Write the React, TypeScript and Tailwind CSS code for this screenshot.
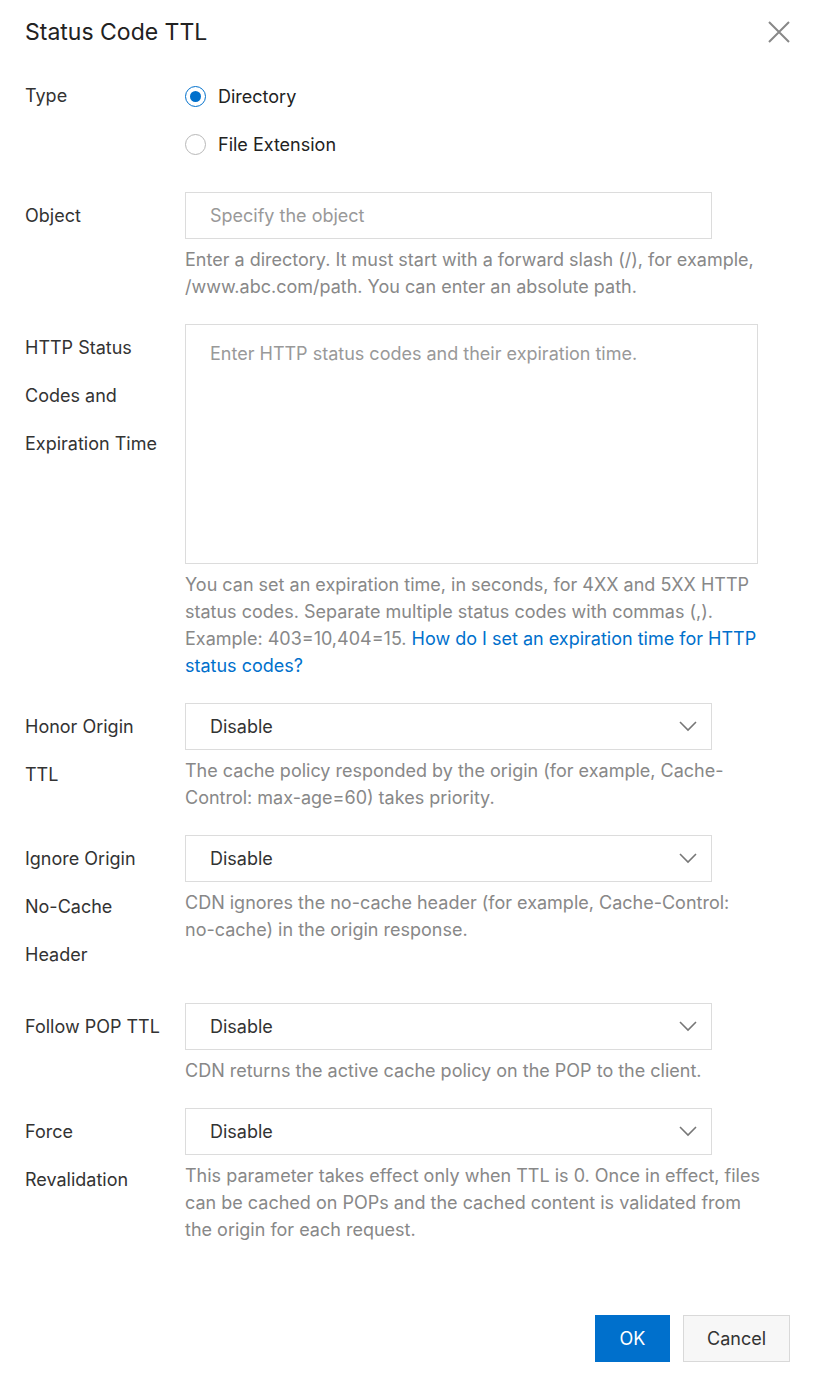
import React from "react"

const font = { fontFamily: "Inter, 'Liberation Sans', Arial, sans-serif" }

function Chevron() {
  return (
    <svg width="18" height="11" viewBox="0 0 18 11" fill="none" className="text-[#777]">
      <path d="M1 1l8 8 8-8" stroke="currentColor" strokeWidth="1.6" />
    </svg>
  )
}

function Radio({ checked, label }: { checked?: boolean; label: string }) {
  return (
    <div className="flex h-[48px] items-center">
      <span
        className={
          checked
            ? "flex h-[21px] w-[21px] items-center justify-center rounded-full border border-[#0070cc] bg-white"
            : "flex h-[21px] w-[21px] items-center justify-center rounded-full border border-[#b8b8b8] bg-white"
        }
      >
        {checked && <span className="h-[11px] w-[11px] rounded-full bg-[#0070cc]" />}
      </span>
      <span className="ml-[12px] text-[18px] text-[#222]">{label}</span>
    </div>
  )
}

function Row({ label, children }: { label: string[]; children: React.ReactNode }) {
  return (
    <div className="flex">
      <div className="w-[160px] shrink-0 text-[18px] leading-[48px] text-[#333]">
        {label.map((l) => (
          <div key={l}>{l}</div>
        ))}
      </div>
      <div className="w-[573px]">{children}</div>
    </div>
  )
}

function Help({ children }: { children: React.ReactNode }) {
  return <div className="mt-[7px] whitespace-nowrap text-[18px] leading-[27px] text-[#888]">{children}</div>
}

function Select() {
  return (
    <div className="flex h-[47px] w-[527px] items-center justify-between border border-[#dcdcdc] bg-white pl-[24px] pr-[14px]">
      <span className="text-[18px] text-[#333]">Disable</span>
      <Chevron />
    </div>
  )
}

export default function App() {
  return (
    <div className="min-h-[1382px] w-[822px] bg-white" style={font}>
      <div className="flex h-[64px] items-center justify-between pl-[25px] pr-[32px]">
        <h1 className="text-[23px] text-[#222]">Status Code TTL</h1>
        <svg width="22" height="22" viewBox="0 0 22 22" className="text-[#888]">
          <path d="M1 1l20 20M21 1L1 21" stroke="currentColor" strokeWidth="2" />
        </svg>
      </div>

      <div className="flex flex-col gap-6 pl-[25px] pt-[8px]">
        <Row label={["Type"]}>
          <Radio checked label="Directory" />
          <Radio label="File Extension" />
        </Row>

        <Row label={["Object"]}>
          <div className="flex h-[47px] w-[527px] items-center border border-[#dcdcdc] pl-[24px] text-[18px] text-[#999]">
            Specify the object
          </div>
          <Help>
            Enter a directory. It must start with a forward slash (/), for example,
            <br />
            /www.abc.com/path. You can enter an absolute path.
          </Help>
        </Row>

        <Row label={["HTTP Status", "Codes and", "Expiration Time"]}>
          <div className="h-[240px] w-[573px] border border-[#dcdcdc] pl-[24px] pt-[15px] text-[18px] text-[#999]">
            Enter HTTP status codes and their expiration time.
          </div>
          <Help>
            You can set an expiration time, in seconds, for 4XX and 5XX HTTP
            <br />
            status codes. Separate multiple status codes with commas (,).
            <br />
            Example: 403=10,404=15.{" "}
            <span className="text-[#0070cc]">
              How do I set an expiration time for HTTP
              <br />
              status codes?
            </span>
          </Help>
        </Row>

        <Row label={["Honor Origin", "TTL"]}>
          <Select />
          <Help>
            The cache policy responded by the origin (for example, Cache-
            <br />
            Control: max-age=60) takes priority.
          </Help>
        </Row>

        <Row label={["Ignore Origin", "No-Cache", "Header"]}>
          <Select />
          <Help>
            CDN ignores the no-cache header (for example, Cache-Control:
            <br />
            no-cache) in the origin response.
          </Help>
        </Row>

        <Row label={["Follow POP TTL"]}>
          <Select />
          <Help>CDN returns the active cache policy on the POP to the client.</Help>
        </Row>

        <Row label={["Force", "Revalidation"]}>
          <Select />
          <Help>
            This parameter takes effect only when TTL is 0. Once in effect, files
            <br />
            can be cached on POPs and the cached content is validated from
            <br />
            the origin for each request.
          </Help>
        </Row>
      </div>

      <div className="mt-[72px] flex justify-end gap-[13px] pr-[32px]">
        <button className="h-[47px] w-[75px] bg-[#0070cc] text-[18px] text-white">OK</button>
        <button className="h-[47px] w-[107px] border border-[#d9d9d9] bg-[#f7f7f7] text-[18px] text-[#333]">
          Cancel
        </button>
      </div>
    </div>
  )
}
